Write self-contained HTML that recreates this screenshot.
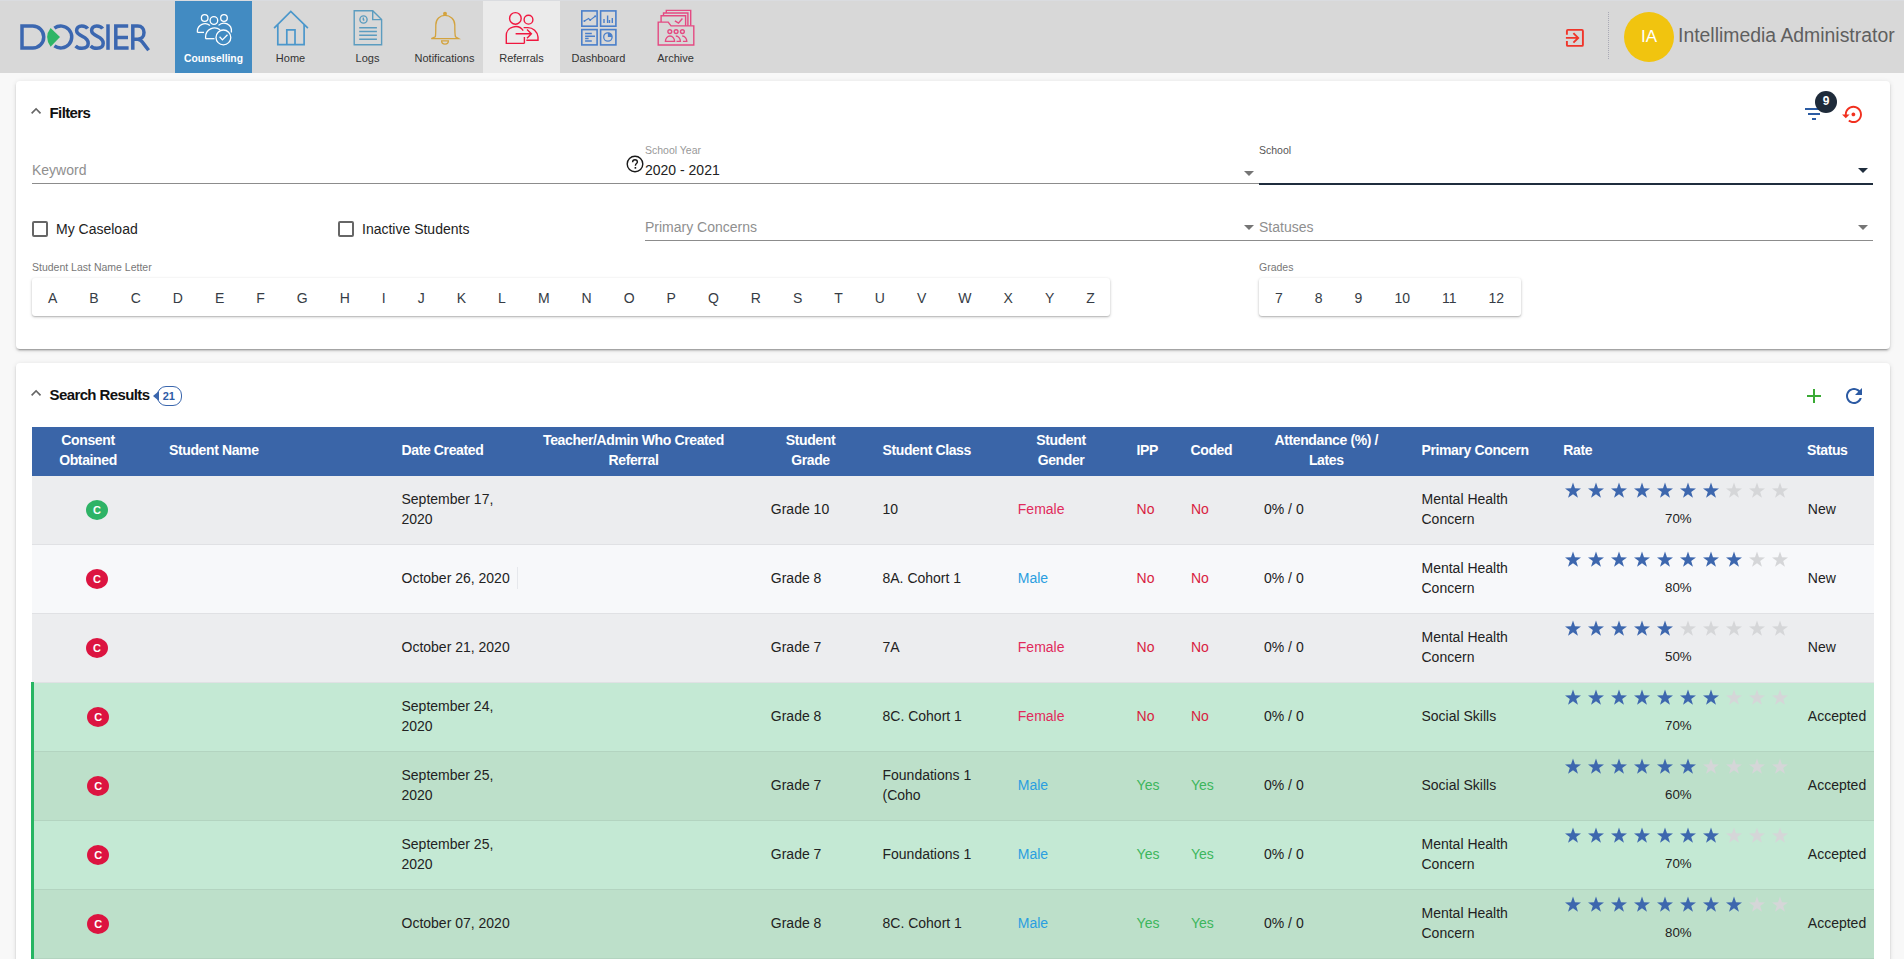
<!DOCTYPE html>
<html><head><meta charset="utf-8"><title>Dossier</title>
<style>
*{box-sizing:border-box;margin:0;padding:0}
html,body{width:1904px;height:959px;overflow:hidden}
body{background:#f8f8f8;font-family:"Liberation Sans",sans-serif;color:#222;position:relative}
.abs{position:absolute}
#hdr{position:absolute;left:0;top:0;width:1904px;height:73px;background:#d8d8d8;border-top:1px solid #dadce0}
.tab{position:absolute;top:0px;width:77px;height:72px;text-align:center}
.tab .lbl{position:absolute;left:0;right:0;top:51px;font-size:11px;color:#333;line-height:13px}
.tab svg{position:absolute;left:0;top:0}
.card{position:absolute;background:#fff;border-radius:4px;box-shadow:0 3px 1px -2px rgba(0,0,0,.2),0 2px 2px 0 rgba(0,0,0,.14),0 1px 5px 0 rgba(0,0,0,.12)}
.ttl{position:absolute;font-size:15px;font-weight:700;color:#111;letter-spacing:-0.6px;line-height:17px}
.small{position:absolute;font-size:10.5px;color:#8a8a8a;line-height:12px;white-space:nowrap}
.inp{position:absolute;font-size:14px;line-height:16px;white-space:nowrap}
.uline{position:absolute;height:1px;background:#8c8c8c}
.arrow{position:absolute;width:0;height:0;border-left:5px solid transparent;border-right:5px solid transparent;border-top:5px solid #555}
.cb{position:absolute;width:16px;height:16px;border:2px solid #666;border-radius:2px}
.btnbox{position:absolute;background:#fff;border-radius:3px;box-shadow:0 1px 3px rgba(0,0,0,.25),0 1px 1px rgba(0,0,0,.1);display:flex;height:38px}
.btnbox span{display:block;padding:0 16px;font-size:14px;line-height:40px;height:38px;color:#363c45}
#tbl{position:absolute;left:32px;top:427px;width:1842px}
.th{position:absolute;top:0;height:49px;background:#3a65a8;width:1842px}
.th div{position:absolute;color:#fff;font-weight:700;font-size:14px;line-height:20px;letter-spacing:-0.38px;white-space:nowrap}
.row{position:absolute;left:0;width:1842px;height:69px;border-bottom:1px solid #dcdde0}
.row div{position:absolute;font-size:14px;line-height:20px;color:#222;white-space:nowrap}
.row div.badge{width:22px;height:20px;border-radius:50%;color:#fff;font-weight:700;font-size:11px;line-height:20px;text-align:center}
.stars{font-size:0}
.stars svg{position:absolute;top:0}
</style></head>
<body>
<div id="hdr"><svg class="abs" style="left:0px;top:-1px;" width="160" height="73" viewBox="0 0 160 73">
<g fill="none" stroke="#3b67b0" stroke-width="3.5">
<path d="M22,26.1 H32.8 A10.95,10.95 0 0 1 32.8,48 H22 Z"/>
<path d="M54.4,28.1 A10.95,10.95 0 1 1 54.4,45.9"/>
<path d="M87.6,28.6 C86.4,26.7 84.2,25.9 81.8,25.9 C78.4,25.9 76.6,28.0 76.6,30.6 C76.6,33.6 79.4,35.0 82.4,36.3 C85.6,37.7 88.2,39.4 88.2,43.3 C88.2,46.6 85.6,48.3 82.0,48.3 C79.4,48.3 77.2,47.5 75.6,45.9"/>
<path d="M102.6,28.6 C101.4,26.7 99.2,25.9 96.8,25.9 C93.4,25.9 91.6,28.0 91.6,30.6 C91.6,33.6 94.4,35.0 97.4,36.3 C100.6,37.7 103.2,39.4 103.2,43.3 C103.2,46.6 100.6,48.3 97.0,48.3 C94.4,48.3 92.2,47.5 90.6,45.9"/>
<path d="M108,24.3 V49.8"/>
<path d="M128.2,26.1 H115.8 V48 H128.6 M115.8,37.4 H128"/>
<path d="M132.8,49.8 V26.1 H137.8 C141.8,26.1 144,28.8 144,32.6 C144,36.4 141.5,39.2 137.8,39.2 H132.8 M137.8,39.2 C140,39.4 141.4,40.6 142.8,42.6 L148.6,50.2"/>
</g>
<path fill="#2eb566" d="M50.6,28 L60,37 L50.6,46.8 Q43.6,37 50.6,28 Z"/>
</svg><div class="tab" style="left:175px;background:#428bc2;"><svg class="abs" style="left:0px;top:-1px;" width="77" height="72" viewBox="0 0 77 72">
<g fill="none" stroke="#fff" stroke-width="1.3">
<circle cx="29.7" cy="18" r="3.3"/>
<circle cx="38.9" cy="20.5" r="3.8"/>
<circle cx="49" cy="18" r="3.3"/>
<path d="M22.4,32.4 V31 A7.6,7.6 0 0 1 35,25.6"/>
<path d="M43.5,25.4 A7.6,7.6 0 0 1 56.4,31.6 V32.4"/>
<path d="M30.6,38.7 V37 A9,9 0 0 1 45,29.8"/>
<path d="M30.6,38.7 H39.5"/>
<path d="M22.4,32.4 H29"/>
<circle cx="48.4" cy="37.4" r="7.4"/>
<path d="M44.6,36.8 L47.4,39.9 L52.5,34.8"/>
</g></svg><div class="lbl" style="color:#fff;font-weight:700;font-size:10.3px">Counselling</div></div><div class="tab" style="left:252px;"><svg class="abs" style="left:0px;top:-1px;" width="77" height="72" viewBox="0 0 77 72">
<g fill="none" stroke="#4b97cb" stroke-width="1.7">
<path d="M22.1,28.1 L38.8,11.4 L55.9,28.1"/>
<path d="M25.8,24.8 V44.6 H52.1 V24.8"/>
<path d="M34.8,44.6 V29.8 H43 V44.6"/>
</g></svg><div class="lbl" style="color:#333;font-weight:400;font-size:11px">Home</div></div><div class="tab" style="left:329px;"><svg class="abs" style="left:0px;top:-1px;" width="77" height="72" viewBox="0 0 77 72">
<g fill="none" stroke="#5b9cbf" stroke-width="1.4">
<path d="M25.2,10.8 H43.7 L52.6,19.6 V44.8 H25.2 Z"/>
<path d="M43.7,10.8 V19.6 H52.6"/>
<circle cx="34.5" cy="19.5" r="3.6"/>
<path d="M34.3,17.6 V19.6 L35.3,20.6"/>
<path d="M30.2,27.7 H47.9 M30.2,31.5 H47.9 M30.2,35.3 H47.9 M30.2,39.3 H47.9"/>
</g></svg><div class="lbl" style="color:#333;font-weight:400;font-size:11px">Logs</div></div><div class="tab" style="left:406px;"><svg class="abs" style="left:0px;top:-1px;" width="77" height="72" viewBox="0 0 77 72">
<g fill="none" stroke="#d3a33e" stroke-width="1.3">
<path d="M29.3,36.8 C29.8,35 29.8,32 29.8,25 C29.8,19 34,15.4 39,15.4 C44,15.4 48.8,19 48.8,25 C48.8,32 48.8,35 49.5,36.8 L52.6,38.6 H25.3 Z"/>
<path d="M35.6,40.8 A3.4,3.4 0 0 0 42.4,40.8 Z"/>
</g>
<circle cx="39" cy="13.8" r="2" fill="#d3a33e"/></svg><div class="lbl" style="color:#333;font-weight:400;font-size:11px">Notifications</div></div><div class="tab" style="left:483px;background:#ebebeb;"><svg class="abs" style="left:0px;top:-1px;" width="77" height="72" viewBox="0 0 77 72">
<g fill="none" stroke="#f0173f" stroke-width="1.4">
<circle cx="32.4" cy="18.4" r="5.8"/>
<circle cx="45.5" cy="19.7" r="4.4"/>
<path d="M41.4,43.4 H23.3 V35.6 A9.2,8.6 0 0 1 40.2,30.6"/>
<path d="M41.4,37 V43.4"/>
<path d="M40.6,27.6 H44.4 A10.2,10.2 0 0 1 55,37 V40.2 H43.3"/>
<path d="M32.6,33.8 H48.4 M44,29.4 L48.4,33.8 L44,38.2"/>
</g></svg><div class="lbl" style="color:#333;font-weight:400;font-size:11px">Referrals</div></div><div class="tab" style="left:560px;"><svg class="abs" style="left:0px;top:-1px;" width="77" height="72" viewBox="0 0 77 72">
<g fill="none" stroke="#4a7fca" stroke-width="1.6">
<rect x="21.8" y="10.9" width="15.3" height="15.3"/>
<rect x="40.6" y="10.9" width="15.3" height="15.3"/>
<rect x="21.8" y="29.6" width="15.3" height="15.3"/>
<rect x="40.6" y="29.6" width="15.3" height="15.3"/>
<path d="M24.4,20.9 L28.6,18.5 L30.2,20.1 L35.2,16.3" stroke-width="1.1"/>
<path d="M44,23 V18.9 M47.6,23 V15.4 M49.5,23 V20.1 M52.3,23 V18.1" stroke-width="1.4"/>
<path d="M25.1,33.5 H31.8 M25.1,36.2 H35 M25.1,38.6 H28.6 M25.1,41 H31.8" stroke-width="1.5"/>
<circle cx="47.9" cy="37" r="4.2" stroke-width="1.3"/>
</g>
<g fill="#4a7fca"><circle cx="24.4" cy="20.9" r="1"/><circle cx="30.2" cy="20.1" r="1"/><circle cx="35.2" cy="16.3" r="1"/>
<path d="M47.9,32.8 A4.2,4.2 0 0 1 52.1,37 H47.9 Z"/></g></svg><div class="lbl" style="color:#333;font-weight:400;font-size:11px">Dashboard</div></div><div class="tab" style="left:637px;"><svg class="abs" style="left:0px;top:-1px;" width="77" height="72" viewBox="0 0 77 72">
<g fill="none" stroke="#e44a82" stroke-width="1.4">
<path d="M21.2,45 V22.1 H31.2 L34,25.9 H56.8 V45 Z"/>
<path d="M24.1,22 V15.8 H48.6 V25.8"/>
<path d="M26.5,15.7 V13 H50.9 V25.8"/>
<path d="M29.3,12.9 V10.4 H53.7 V25.8"/>
<path d="M37.9,20.9 L41.5,23.2 L45.4,18.5"/>
<circle cx="32.8" cy="31.6" r="1.9"/><circle cx="39.1" cy="31.6" r="1.9"/><circle cx="45.4" cy="31.6" r="1.9"/>
<path d="M28.4,41.4 A4.6,5.4 0 0 1 37.6,41.4 Z"/>
<path d="M38.8,36 A4.6,5.4 0 0 1 43.4,41.4 H39.5"/>
<path d="M45.2,36 A4.6,5.4 0 0 1 49.8,41.4 H45.9"/>
</g></svg><div class="lbl" style="color:#333;font-weight:400;font-size:11px">Archive</div></div><svg class="abs" style="left:1564px;top:25px;" width="24" height="24" viewBox="0 0 24 24"><g fill="none" stroke="#f0352a" stroke-width="1.9"><path d="M2.9,8.8 V4.9 Q2.9,3.9 3.9,3.9 H17.9 Q18.9,3.9 18.9,4.9 V18.9 Q18.9,19.9 17.9,19.9 H3.9 Q2.9,19.9 2.9,18.9 V14.9"/><path d="M1.9,11.9 H14.6 M9.4,7.1 L14.2,11.9 L9.4,16.6"/></g></svg><div class="abs" style="left:1608px;top:11px;width:1px;height:47px;border-left:1px dotted #a9a9b5"></div><div class="abs" style="left:1624px;top:11px;width:50px;height:50px;border-radius:25px;background:#f1c40f;color:#fff;font-size:17px;line-height:50px;text-align:center">IA</div><div class="abs" style="left:1678px;top:23px;font-size:19.4px;line-height:22px;color:#5f5f5f;white-space:nowrap">Intellimedia Administrator</div></div><div class="card" style="left:16px;top:81px;width:1874px;height:268px"></div><svg class="abs" style="left:26px;top:101px;transform-origin:0 0;transform:scale(0.84)" width="24" height="24" viewBox="0 0 24 24"><path fill="#666" d="M12 8l-6 6 1.41 1.41L12 10.83l4.59 4.58L18 14z"/></svg><div class="ttl" style="left:49.5px;top:104px">Filters</div><div class="abs" style="left:1804.7px;top:108.2px;width:18px;height:1.6px;background:#2b5ba3"></div><div class="abs" style="left:1807.7px;top:113.1px;width:12.1px;height:1.7px;background:#2b5ba3"></div><div class="abs" style="left:1811.5px;top:118.1px;width:4.3px;height:1.6px;background:#2b5ba3"></div><div class="abs" style="left:1815px;top:91px;width:22px;height:22px;border-radius:11px;background:#1f2b3a;color:#fff;font-weight:700;font-size:12px;line-height:21px;text-align:center">9</div><svg class="abs" style="left:1841.7px;top:102.7px;transform-origin:0 0;transform:scale(0.95)" width="24" height="24" viewBox="0 0 24 24"><path fill="#f1301f" d="M14 12c0-1.1-.9-2-2-2s-2 .9-2 2 .9 2 2 2 2-.9 2-2zm-2-9c-4.97 0-9 4.030-9 9H0l4 4 4-4H5c0-3.87 3.13-7 7-7s7 3.13 7 7-3.13 7-7 7c-1.51 0-2.910-.49-4.06-1.3l-1.42 1.44C8.04 20.3 9.94 21 12 21c4.97 0 9-4.03 9-9s-4.03-9-9-9z"/></svg><div class="inp" style="left:32px;top:162px;color:#8f8f8f">Keyword</div><div class="uline" style="left:32px;top:183px;width:613px"></div><svg class="abs" style="left:626px;top:155px;" width="20" height="20" viewBox="0 0 20 20"><circle cx="9" cy="9" r="7.8" fill="none" stroke="#1a1a1a" stroke-width="1.4"/><path d="M6.6,7.2 C6.6,5.6 7.7,4.7 9,4.7 C10.4,4.7 11.4,5.6 11.4,6.9 C11.4,8.5 9.4,8.7 9.4,10.7" fill="none" stroke="#1a1a1a" stroke-width="1.4"/><rect x="8.6" y="12" width="1.6" height="1.7" fill="#1a1a1a"/></svg><div class="small" style="left:645px;top:143.8px;color:#999">School Year</div><div class="inp" style="left:645px;top:162px;color:#222">2020 - 2021</div><div class="uline" style="left:645px;top:183px;width:614px"></div><div class="arrow" style="left:1244px;top:171px;border-top-color:#757575"></div><div class="small" style="left:1259px;top:143.5px;color:#555">School</div><div class="abs" style="left:1259px;top:183px;width:614px;height:2px;background:#1f2d3d"></div><div class="arrow" style="left:1858px;top:168px;border-top-color:#1f2d3d"></div><div class="cb" style="left:32px;top:221px"></div><div class="inp" style="left:56px;top:221px">My Caseload</div><div class="cb" style="left:338px;top:221px"></div><div class="inp" style="left:362px;top:221px">Inactive Students</div><div class="inp" style="left:645px;top:219px;color:#8f8f8f">Primary Concerns</div><div class="uline" style="left:645px;top:240px;width:614px"></div><div class="arrow" style="left:1244px;top:225px;border-top-color:#757575"></div><div class="inp" style="left:1259px;top:219px;color:#8f8f8f">Statuses</div><div class="uline" style="left:1259px;top:240px;width:614px"></div><div class="arrow" style="left:1858px;top:225px;border-top-color:#757575"></div><div class="small" style="left:32px;top:261px;color:#777">Student Last Name Letter</div><div class="btnbox" style="left:32px;top:278px;width:1078px"><span>A</span><span>B</span><span>C</span><span>D</span><span>E</span><span>F</span><span>G</span><span>H</span><span>I</span><span>J</span><span>K</span><span>L</span><span>M</span><span>N</span><span>O</span><span>P</span><span>Q</span><span>R</span><span>S</span><span>T</span><span>U</span><span>V</span><span>W</span><span>X</span><span>Y</span><span>Z</span></div><div class="small" style="left:1259px;top:261px;color:#777">Grades</div><div class="btnbox" style="left:1259px;top:278px;width:262px"><span>7</span><span>8</span><span>9</span><span>10</span><span>11</span><span>12</span></div><div class="card" style="left:16px;top:363px;width:1874px;height:620px"></div><svg class="abs" style="left:26px;top:383px;transform-origin:0 0;transform:scale(0.84)" width="24" height="24" viewBox="0 0 24 24"><path fill="#666" d="M12 8l-6 6 1.41 1.41L12 10.83l4.59 4.58L18 14z"/></svg><div class="ttl" style="left:49.5px;top:386px">Search Results</div><div class="abs" style="left:157.3px;top:386px;width:24.6px;height:20px;border:1.6px solid #3a66ad;border-radius:9px;color:#2f5ca6;font-size:11px;font-weight:700;line-height:19px;text-align:center;padding-right:1.5px;background:#fff">21</div><div class="abs" style="left:153px;top:390.6px;width:0;height:0;border-top:5px solid transparent;border-bottom:5px solid transparent;border-right:6px solid #3a66ad"></div><svg class="abs" style="left:1801.5px;top:384px;" width="24" height="24" viewBox="0 0 24 24"><path fill="#3aaa35" d="M19 13h-6v6h-2v-6H5v-2h6V5h2v6h6v2z"/></svg><svg class="abs" style="left:1841.8px;top:384px;" width="24" height="24" viewBox="0 0 24 24"><path fill="#2c5aa3" d="M17.65 6.35C16.2 4.9 14.21 4 12 4c-4.42 0-7.990 3.58-7.99 8s3.57 8 7.99 8c3.73 0 6.84-2.55 7.73-6h-2.08c-.82 2.33-3.04 4-5.65 4-3.31 0-6-2.69-6-6s2.69-6 6-6c1.66 0 3.140.69 4.22 1.78L13 11h7V4l-2.35 2.35z"/></svg><div id="tbl"><div class="th"><div style="left:-4.0px;width:120px;text-align:center;top:3.4px">Consent<br>Obtained</div><div style="left:137px;top:13.4px">Student Name</div><div style="left:369.5px;top:13.4px">Date Created</div><div style="left:491.5px;width:220px;text-align:center;top:3.4px">Teacher/Admin Who Created<br>Referral</div><div style="left:738.5px;width:80px;text-align:center;top:3.4px">Student<br>Grade</div><div style="left:850.5px;top:13.4px">Student Class</div><div style="left:989.0px;width:80px;text-align:center;top:3.4px">Student<br>Gender</div><div style="left:1104.5px;top:13.4px">IPP</div><div style="left:1158.5px;top:13.4px">Coded</div><div style="left:1224.3px;width:140px;text-align:center;top:3.4px">Attendance (%) /<br>Lates</div><div style="left:1389.5px;top:13.4px">Primary Concern</div><div style="left:1531.3px;top:13.4px">Rate</div><div style="left:1775px;top:13.4px">Status</div></div><div class="row" style="top:49px;background:#ecedef;border-bottom-color:#e0e1e4"><div class="badge" style="left:54px;top:24px;background:#2eb366">C</div><div style="left:369.5px;top:13px;">September 17,<br>2020</div><div style="left:738.8px;top:23px;">Grade 10</div><div style="left:850.5px;top:23px;">10</div><div style="left:985.8px;top:23px;color:#e12a5c">Female</div><div style="left:1104.6px;top:23px;color:#d81d41">No</div><div style="left:1159px;top:23px;color:#d81d41">No</div><div style="left:1232px;top:23px;">0% / 0</div><div style="left:1389.5px;top:13px;">Mental Health<br>Concern</div><div style="left:1532.3px;top:5.8px;width:235px;height:18px"><svg style="position:absolute;left:0px;top:0" width="18" height="18" viewBox="0 0 18 18"><path fill="#3d67ae" d="M9.00 0.60 L10.97 6.28 L16.99 6.40 L12.20 10.04 L13.94 15.80 L9.00 12.36 L4.06 15.80 L5.80 10.04 L1.01 6.40 L7.03 6.28 Z"/></svg><svg style="position:absolute;left:23px;top:0" width="18" height="18" viewBox="0 0 18 18"><path fill="#3d67ae" d="M9.00 0.60 L10.97 6.28 L16.99 6.40 L12.20 10.04 L13.94 15.80 L9.00 12.36 L4.06 15.80 L5.80 10.04 L1.01 6.40 L7.03 6.28 Z"/></svg><svg style="position:absolute;left:46px;top:0" width="18" height="18" viewBox="0 0 18 18"><path fill="#3d67ae" d="M9.00 0.60 L10.97 6.28 L16.99 6.40 L12.20 10.04 L13.94 15.80 L9.00 12.36 L4.06 15.80 L5.80 10.04 L1.01 6.40 L7.03 6.28 Z"/></svg><svg style="position:absolute;left:69px;top:0" width="18" height="18" viewBox="0 0 18 18"><path fill="#3d67ae" d="M9.00 0.60 L10.97 6.28 L16.99 6.40 L12.20 10.04 L13.94 15.80 L9.00 12.36 L4.06 15.80 L5.80 10.04 L1.01 6.40 L7.03 6.28 Z"/></svg><svg style="position:absolute;left:92px;top:0" width="18" height="18" viewBox="0 0 18 18"><path fill="#3d67ae" d="M9.00 0.60 L10.97 6.28 L16.99 6.40 L12.20 10.04 L13.94 15.80 L9.00 12.36 L4.06 15.80 L5.80 10.04 L1.01 6.40 L7.03 6.28 Z"/></svg><svg style="position:absolute;left:115px;top:0" width="18" height="18" viewBox="0 0 18 18"><path fill="#3d67ae" d="M9.00 0.60 L10.97 6.28 L16.99 6.40 L12.20 10.04 L13.94 15.80 L9.00 12.36 L4.06 15.80 L5.80 10.04 L1.01 6.40 L7.03 6.28 Z"/></svg><svg style="position:absolute;left:138px;top:0" width="18" height="18" viewBox="0 0 18 18"><path fill="#3d67ae" d="M9.00 0.60 L10.97 6.28 L16.99 6.40 L12.20 10.04 L13.94 15.80 L9.00 12.36 L4.06 15.80 L5.80 10.04 L1.01 6.40 L7.03 6.28 Z"/></svg><svg style="position:absolute;left:161px;top:0" width="18" height="18" viewBox="0 0 18 18"><path fill="#d5d6d8" d="M9.00 0.60 L10.97 6.28 L16.99 6.40 L12.20 10.04 L13.94 15.80 L9.00 12.36 L4.06 15.80 L5.80 10.04 L1.01 6.40 L7.03 6.28 Z"/></svg><svg style="position:absolute;left:184px;top:0" width="18" height="18" viewBox="0 0 18 18"><path fill="#d5d6d8" d="M9.00 0.60 L10.97 6.28 L16.99 6.40 L12.20 10.04 L13.94 15.80 L9.00 12.36 L4.06 15.80 L5.80 10.04 L1.01 6.40 L7.03 6.28 Z"/></svg><svg style="position:absolute;left:207px;top:0" width="18" height="18" viewBox="0 0 18 18"><path fill="#d5d6d8" d="M9.00 0.60 L10.97 6.28 L16.99 6.40 L12.20 10.04 L13.94 15.80 L9.00 12.36 L4.06 15.80 L5.80 10.04 L1.01 6.40 L7.03 6.28 Z"/></svg></div><div style="left:1616.4px;top:32.5px;width:60px;text-align:center;font-size:13.3px">70%</div><div style="left:1775.8px;top:23px;">New</div></div><div class="row" style="top:118px;background:#f7f8fa;border-bottom-color:#e0e1e4"><div class="badge" style="left:54px;top:24px;background:#dc1440">C</div><div style="left:369.5px;top:23px;">October 26, 2020</div><div style="left:485px;top:22px;width:1px;height:22px;background:#e6e8ec"></div><div style="left:738.8px;top:23px;">Grade 8</div><div style="left:850.5px;top:23px;">8A. Cohort 1</div><div style="left:985.8px;top:23px;color:#2a9ee0">Male</div><div style="left:1104.6px;top:23px;color:#d81d41">No</div><div style="left:1159px;top:23px;color:#d81d41">No</div><div style="left:1232px;top:23px;">0% / 0</div><div style="left:1389.5px;top:13px;">Mental Health<br>Concern</div><div style="left:1532.3px;top:5.8px;width:235px;height:18px"><svg style="position:absolute;left:0px;top:0" width="18" height="18" viewBox="0 0 18 18"><path fill="#3d67ae" d="M9.00 0.60 L10.97 6.28 L16.99 6.40 L12.20 10.04 L13.94 15.80 L9.00 12.36 L4.06 15.80 L5.80 10.04 L1.01 6.40 L7.03 6.28 Z"/></svg><svg style="position:absolute;left:23px;top:0" width="18" height="18" viewBox="0 0 18 18"><path fill="#3d67ae" d="M9.00 0.60 L10.97 6.28 L16.99 6.40 L12.20 10.04 L13.94 15.80 L9.00 12.36 L4.06 15.80 L5.80 10.04 L1.01 6.40 L7.03 6.28 Z"/></svg><svg style="position:absolute;left:46px;top:0" width="18" height="18" viewBox="0 0 18 18"><path fill="#3d67ae" d="M9.00 0.60 L10.97 6.28 L16.99 6.40 L12.20 10.04 L13.94 15.80 L9.00 12.36 L4.06 15.80 L5.80 10.04 L1.01 6.40 L7.03 6.28 Z"/></svg><svg style="position:absolute;left:69px;top:0" width="18" height="18" viewBox="0 0 18 18"><path fill="#3d67ae" d="M9.00 0.60 L10.97 6.28 L16.99 6.40 L12.20 10.04 L13.94 15.80 L9.00 12.36 L4.06 15.80 L5.80 10.04 L1.01 6.40 L7.03 6.28 Z"/></svg><svg style="position:absolute;left:92px;top:0" width="18" height="18" viewBox="0 0 18 18"><path fill="#3d67ae" d="M9.00 0.60 L10.97 6.28 L16.99 6.40 L12.20 10.04 L13.94 15.80 L9.00 12.36 L4.06 15.80 L5.80 10.04 L1.01 6.40 L7.03 6.28 Z"/></svg><svg style="position:absolute;left:115px;top:0" width="18" height="18" viewBox="0 0 18 18"><path fill="#3d67ae" d="M9.00 0.60 L10.97 6.28 L16.99 6.40 L12.20 10.04 L13.94 15.80 L9.00 12.36 L4.06 15.80 L5.80 10.04 L1.01 6.40 L7.03 6.28 Z"/></svg><svg style="position:absolute;left:138px;top:0" width="18" height="18" viewBox="0 0 18 18"><path fill="#3d67ae" d="M9.00 0.60 L10.97 6.28 L16.99 6.40 L12.20 10.04 L13.94 15.80 L9.00 12.36 L4.06 15.80 L5.80 10.04 L1.01 6.40 L7.03 6.28 Z"/></svg><svg style="position:absolute;left:161px;top:0" width="18" height="18" viewBox="0 0 18 18"><path fill="#3d67ae" d="M9.00 0.60 L10.97 6.28 L16.99 6.40 L12.20 10.04 L13.94 15.80 L9.00 12.36 L4.06 15.80 L5.80 10.04 L1.01 6.40 L7.03 6.28 Z"/></svg><svg style="position:absolute;left:184px;top:0" width="18" height="18" viewBox="0 0 18 18"><path fill="#d5d6d8" d="M9.00 0.60 L10.97 6.28 L16.99 6.40 L12.20 10.04 L13.94 15.80 L9.00 12.36 L4.06 15.80 L5.80 10.04 L1.01 6.40 L7.03 6.28 Z"/></svg><svg style="position:absolute;left:207px;top:0" width="18" height="18" viewBox="0 0 18 18"><path fill="#d5d6d8" d="M9.00 0.60 L10.97 6.28 L16.99 6.40 L12.20 10.04 L13.94 15.80 L9.00 12.36 L4.06 15.80 L5.80 10.04 L1.01 6.40 L7.03 6.28 Z"/></svg></div><div style="left:1616.4px;top:32.5px;width:60px;text-align:center;font-size:13.3px">80%</div><div style="left:1775.8px;top:23px;">New</div></div><div class="row" style="top:187px;background:#ecedef;border-bottom-color:#e0e1e4"><div class="badge" style="left:54px;top:24px;background:#dc1440">C</div><div style="left:369.5px;top:23px;">October 21, 2020</div><div style="left:738.8px;top:23px;">Grade 7</div><div style="left:850.5px;top:23px;">7A</div><div style="left:985.8px;top:23px;color:#e12a5c">Female</div><div style="left:1104.6px;top:23px;color:#d81d41">No</div><div style="left:1159px;top:23px;color:#d81d41">No</div><div style="left:1232px;top:23px;">0% / 0</div><div style="left:1389.5px;top:13px;">Mental Health<br>Concern</div><div style="left:1532.3px;top:5.8px;width:235px;height:18px"><svg style="position:absolute;left:0px;top:0" width="18" height="18" viewBox="0 0 18 18"><path fill="#3d67ae" d="M9.00 0.60 L10.97 6.28 L16.99 6.40 L12.20 10.04 L13.94 15.80 L9.00 12.36 L4.06 15.80 L5.80 10.04 L1.01 6.40 L7.03 6.28 Z"/></svg><svg style="position:absolute;left:23px;top:0" width="18" height="18" viewBox="0 0 18 18"><path fill="#3d67ae" d="M9.00 0.60 L10.97 6.28 L16.99 6.40 L12.20 10.04 L13.94 15.80 L9.00 12.36 L4.06 15.80 L5.80 10.04 L1.01 6.40 L7.03 6.28 Z"/></svg><svg style="position:absolute;left:46px;top:0" width="18" height="18" viewBox="0 0 18 18"><path fill="#3d67ae" d="M9.00 0.60 L10.97 6.28 L16.99 6.40 L12.20 10.04 L13.94 15.80 L9.00 12.36 L4.06 15.80 L5.80 10.04 L1.01 6.40 L7.03 6.28 Z"/></svg><svg style="position:absolute;left:69px;top:0" width="18" height="18" viewBox="0 0 18 18"><path fill="#3d67ae" d="M9.00 0.60 L10.97 6.28 L16.99 6.40 L12.20 10.04 L13.94 15.80 L9.00 12.36 L4.06 15.80 L5.80 10.04 L1.01 6.40 L7.03 6.28 Z"/></svg><svg style="position:absolute;left:92px;top:0" width="18" height="18" viewBox="0 0 18 18"><path fill="#3d67ae" d="M9.00 0.60 L10.97 6.28 L16.99 6.40 L12.20 10.04 L13.94 15.80 L9.00 12.36 L4.06 15.80 L5.80 10.04 L1.01 6.40 L7.03 6.28 Z"/></svg><svg style="position:absolute;left:115px;top:0" width="18" height="18" viewBox="0 0 18 18"><path fill="#d5d6d8" d="M9.00 0.60 L10.97 6.28 L16.99 6.40 L12.20 10.04 L13.94 15.80 L9.00 12.36 L4.06 15.80 L5.80 10.04 L1.01 6.40 L7.03 6.28 Z"/></svg><svg style="position:absolute;left:138px;top:0" width="18" height="18" viewBox="0 0 18 18"><path fill="#d5d6d8" d="M9.00 0.60 L10.97 6.28 L16.99 6.40 L12.20 10.04 L13.94 15.80 L9.00 12.36 L4.06 15.80 L5.80 10.04 L1.01 6.40 L7.03 6.28 Z"/></svg><svg style="position:absolute;left:161px;top:0" width="18" height="18" viewBox="0 0 18 18"><path fill="#d5d6d8" d="M9.00 0.60 L10.97 6.28 L16.99 6.40 L12.20 10.04 L13.94 15.80 L9.00 12.36 L4.06 15.80 L5.80 10.04 L1.01 6.40 L7.03 6.28 Z"/></svg><svg style="position:absolute;left:184px;top:0" width="18" height="18" viewBox="0 0 18 18"><path fill="#d5d6d8" d="M9.00 0.60 L10.97 6.28 L16.99 6.40 L12.20 10.04 L13.94 15.80 L9.00 12.36 L4.06 15.80 L5.80 10.04 L1.01 6.40 L7.03 6.28 Z"/></svg><svg style="position:absolute;left:207px;top:0" width="18" height="18" viewBox="0 0 18 18"><path fill="#d5d6d8" d="M9.00 0.60 L10.97 6.28 L16.99 6.40 L12.20 10.04 L13.94 15.80 L9.00 12.36 L4.06 15.80 L5.80 10.04 L1.01 6.40 L7.03 6.28 Z"/></svg></div><div style="left:1616.4px;top:32.5px;width:60px;text-align:center;font-size:13.3px">50%</div><div style="left:1775.8px;top:23px;">New</div></div><div class="row" style="top:256px;background:#c4e9d4;border-bottom-color:#b3d4c0"><div style="left:-1px;top:-1px;width:3px;height:70px;background:#26b562"></div><div class="badge" style="left:55.2px;top:24px;background:#dc1440">C</div><div style="left:369.5px;top:13px;">September 24,<br>2020</div><div style="left:738.8px;top:23px;">Grade 8</div><div style="left:850.5px;top:23px;">8C. Cohort 1</div><div style="left:985.8px;top:23px;color:#e12a5c">Female</div><div style="left:1104.6px;top:23px;color:#d81d41">No</div><div style="left:1159px;top:23px;color:#d81d41">No</div><div style="left:1232px;top:23px;">0% / 0</div><div style="left:1389.5px;top:23px;">Social Skills</div><div style="left:1532.3px;top:5.8px;width:235px;height:18px"><svg style="position:absolute;left:0px;top:0" width="18" height="18" viewBox="0 0 18 18"><path fill="#3d67ae" d="M9.00 0.60 L10.97 6.28 L16.99 6.40 L12.20 10.04 L13.94 15.80 L9.00 12.36 L4.06 15.80 L5.80 10.04 L1.01 6.40 L7.03 6.28 Z"/></svg><svg style="position:absolute;left:23px;top:0" width="18" height="18" viewBox="0 0 18 18"><path fill="#3d67ae" d="M9.00 0.60 L10.97 6.28 L16.99 6.40 L12.20 10.04 L13.94 15.80 L9.00 12.36 L4.06 15.80 L5.80 10.04 L1.01 6.40 L7.03 6.28 Z"/></svg><svg style="position:absolute;left:46px;top:0" width="18" height="18" viewBox="0 0 18 18"><path fill="#3d67ae" d="M9.00 0.60 L10.97 6.28 L16.99 6.40 L12.20 10.04 L13.94 15.80 L9.00 12.36 L4.06 15.80 L5.80 10.04 L1.01 6.40 L7.03 6.28 Z"/></svg><svg style="position:absolute;left:69px;top:0" width="18" height="18" viewBox="0 0 18 18"><path fill="#3d67ae" d="M9.00 0.60 L10.97 6.28 L16.99 6.40 L12.20 10.04 L13.94 15.80 L9.00 12.36 L4.06 15.80 L5.80 10.04 L1.01 6.40 L7.03 6.28 Z"/></svg><svg style="position:absolute;left:92px;top:0" width="18" height="18" viewBox="0 0 18 18"><path fill="#3d67ae" d="M9.00 0.60 L10.97 6.28 L16.99 6.40 L12.20 10.04 L13.94 15.80 L9.00 12.36 L4.06 15.80 L5.80 10.04 L1.01 6.40 L7.03 6.28 Z"/></svg><svg style="position:absolute;left:115px;top:0" width="18" height="18" viewBox="0 0 18 18"><path fill="#3d67ae" d="M9.00 0.60 L10.97 6.28 L16.99 6.40 L12.20 10.04 L13.94 15.80 L9.00 12.36 L4.06 15.80 L5.80 10.04 L1.01 6.40 L7.03 6.28 Z"/></svg><svg style="position:absolute;left:138px;top:0" width="18" height="18" viewBox="0 0 18 18"><path fill="#3d67ae" d="M9.00 0.60 L10.97 6.28 L16.99 6.40 L12.20 10.04 L13.94 15.80 L9.00 12.36 L4.06 15.80 L5.80 10.04 L1.01 6.40 L7.03 6.28 Z"/></svg><svg style="position:absolute;left:161px;top:0" width="18" height="18" viewBox="0 0 18 18"><path fill="#d5d6d8" d="M9.00 0.60 L10.97 6.28 L16.99 6.40 L12.20 10.04 L13.94 15.80 L9.00 12.36 L4.06 15.80 L5.80 10.04 L1.01 6.40 L7.03 6.28 Z"/></svg><svg style="position:absolute;left:184px;top:0" width="18" height="18" viewBox="0 0 18 18"><path fill="#d5d6d8" d="M9.00 0.60 L10.97 6.28 L16.99 6.40 L12.20 10.04 L13.94 15.80 L9.00 12.36 L4.06 15.80 L5.80 10.04 L1.01 6.40 L7.03 6.28 Z"/></svg><svg style="position:absolute;left:207px;top:0" width="18" height="18" viewBox="0 0 18 18"><path fill="#d5d6d8" d="M9.00 0.60 L10.97 6.28 L16.99 6.40 L12.20 10.04 L13.94 15.80 L9.00 12.36 L4.06 15.80 L5.80 10.04 L1.01 6.40 L7.03 6.28 Z"/></svg></div><div style="left:1616.4px;top:32.5px;width:60px;text-align:center;font-size:13.3px">70%</div><div style="left:1775.8px;top:23px;">Accepted</div></div><div class="row" style="top:325px;background:#bde0ca;border-bottom-color:#b3d4c0"><div style="left:-1px;top:-1px;width:3px;height:70px;background:#26b562"></div><div class="badge" style="left:55.2px;top:24px;background:#dc1440">C</div><div style="left:369.5px;top:13px;">September 25,<br>2020</div><div style="left:738.8px;top:23px;">Grade 7</div><div style="left:850.5px;top:13px;">Foundations 1<br>(Coho</div><div style="left:985.8px;top:23px;color:#2a9ee0">Male</div><div style="left:1104.6px;top:23px;color:#3cb65c">Yes</div><div style="left:1159px;top:23px;color:#3cb65c">Yes</div><div style="left:1232px;top:23px;">0% / 0</div><div style="left:1389.5px;top:23px;">Social Skills</div><div style="left:1532.3px;top:5.8px;width:235px;height:18px"><svg style="position:absolute;left:0px;top:0" width="18" height="18" viewBox="0 0 18 18"><path fill="#3d67ae" d="M9.00 0.60 L10.97 6.28 L16.99 6.40 L12.20 10.04 L13.94 15.80 L9.00 12.36 L4.06 15.80 L5.80 10.04 L1.01 6.40 L7.03 6.28 Z"/></svg><svg style="position:absolute;left:23px;top:0" width="18" height="18" viewBox="0 0 18 18"><path fill="#3d67ae" d="M9.00 0.60 L10.97 6.28 L16.99 6.40 L12.20 10.04 L13.94 15.80 L9.00 12.36 L4.06 15.80 L5.80 10.04 L1.01 6.40 L7.03 6.28 Z"/></svg><svg style="position:absolute;left:46px;top:0" width="18" height="18" viewBox="0 0 18 18"><path fill="#3d67ae" d="M9.00 0.60 L10.97 6.28 L16.99 6.40 L12.20 10.04 L13.94 15.80 L9.00 12.36 L4.06 15.80 L5.80 10.04 L1.01 6.40 L7.03 6.28 Z"/></svg><svg style="position:absolute;left:69px;top:0" width="18" height="18" viewBox="0 0 18 18"><path fill="#3d67ae" d="M9.00 0.60 L10.97 6.28 L16.99 6.40 L12.20 10.04 L13.94 15.80 L9.00 12.36 L4.06 15.80 L5.80 10.04 L1.01 6.40 L7.03 6.28 Z"/></svg><svg style="position:absolute;left:92px;top:0" width="18" height="18" viewBox="0 0 18 18"><path fill="#3d67ae" d="M9.00 0.60 L10.97 6.28 L16.99 6.40 L12.20 10.04 L13.94 15.80 L9.00 12.36 L4.06 15.80 L5.80 10.04 L1.01 6.40 L7.03 6.28 Z"/></svg><svg style="position:absolute;left:115px;top:0" width="18" height="18" viewBox="0 0 18 18"><path fill="#3d67ae" d="M9.00 0.60 L10.97 6.28 L16.99 6.40 L12.20 10.04 L13.94 15.80 L9.00 12.36 L4.06 15.80 L5.80 10.04 L1.01 6.40 L7.03 6.28 Z"/></svg><svg style="position:absolute;left:138px;top:0" width="18" height="18" viewBox="0 0 18 18"><path fill="#d5d6d8" d="M9.00 0.60 L10.97 6.28 L16.99 6.40 L12.20 10.04 L13.94 15.80 L9.00 12.36 L4.06 15.80 L5.80 10.04 L1.01 6.40 L7.03 6.28 Z"/></svg><svg style="position:absolute;left:161px;top:0" width="18" height="18" viewBox="0 0 18 18"><path fill="#d5d6d8" d="M9.00 0.60 L10.97 6.28 L16.99 6.40 L12.20 10.04 L13.94 15.80 L9.00 12.36 L4.06 15.80 L5.80 10.04 L1.01 6.40 L7.03 6.28 Z"/></svg><svg style="position:absolute;left:184px;top:0" width="18" height="18" viewBox="0 0 18 18"><path fill="#d5d6d8" d="M9.00 0.60 L10.97 6.28 L16.99 6.40 L12.20 10.04 L13.94 15.80 L9.00 12.36 L4.06 15.80 L5.80 10.04 L1.01 6.40 L7.03 6.28 Z"/></svg><svg style="position:absolute;left:207px;top:0" width="18" height="18" viewBox="0 0 18 18"><path fill="#d5d6d8" d="M9.00 0.60 L10.97 6.28 L16.99 6.40 L12.20 10.04 L13.94 15.80 L9.00 12.36 L4.06 15.80 L5.80 10.04 L1.01 6.40 L7.03 6.28 Z"/></svg></div><div style="left:1616.4px;top:32.5px;width:60px;text-align:center;font-size:13.3px">60%</div><div style="left:1775.8px;top:23px;">Accepted</div></div><div class="row" style="top:394px;background:#c4e9d4;border-bottom-color:#b3d4c0"><div style="left:-1px;top:-1px;width:3px;height:70px;background:#26b562"></div><div class="badge" style="left:55.2px;top:24px;background:#dc1440">C</div><div style="left:369.5px;top:13px;">September 25,<br>2020</div><div style="left:738.8px;top:23px;">Grade 7</div><div style="left:850.5px;top:23px;">Foundations 1</div><div style="left:985.8px;top:23px;color:#2a9ee0">Male</div><div style="left:1104.6px;top:23px;color:#3cb65c">Yes</div><div style="left:1159px;top:23px;color:#3cb65c">Yes</div><div style="left:1232px;top:23px;">0% / 0</div><div style="left:1389.5px;top:13px;">Mental Health<br>Concern</div><div style="left:1532.3px;top:5.8px;width:235px;height:18px"><svg style="position:absolute;left:0px;top:0" width="18" height="18" viewBox="0 0 18 18"><path fill="#3d67ae" d="M9.00 0.60 L10.97 6.28 L16.99 6.40 L12.20 10.04 L13.94 15.80 L9.00 12.36 L4.06 15.80 L5.80 10.04 L1.01 6.40 L7.03 6.28 Z"/></svg><svg style="position:absolute;left:23px;top:0" width="18" height="18" viewBox="0 0 18 18"><path fill="#3d67ae" d="M9.00 0.60 L10.97 6.28 L16.99 6.40 L12.20 10.04 L13.94 15.80 L9.00 12.36 L4.06 15.80 L5.80 10.04 L1.01 6.40 L7.03 6.28 Z"/></svg><svg style="position:absolute;left:46px;top:0" width="18" height="18" viewBox="0 0 18 18"><path fill="#3d67ae" d="M9.00 0.60 L10.97 6.28 L16.99 6.40 L12.20 10.04 L13.94 15.80 L9.00 12.36 L4.06 15.80 L5.80 10.04 L1.01 6.40 L7.03 6.28 Z"/></svg><svg style="position:absolute;left:69px;top:0" width="18" height="18" viewBox="0 0 18 18"><path fill="#3d67ae" d="M9.00 0.60 L10.97 6.28 L16.99 6.40 L12.20 10.04 L13.94 15.80 L9.00 12.36 L4.06 15.80 L5.80 10.04 L1.01 6.40 L7.03 6.28 Z"/></svg><svg style="position:absolute;left:92px;top:0" width="18" height="18" viewBox="0 0 18 18"><path fill="#3d67ae" d="M9.00 0.60 L10.97 6.28 L16.99 6.40 L12.20 10.04 L13.94 15.80 L9.00 12.36 L4.06 15.80 L5.80 10.04 L1.01 6.40 L7.03 6.28 Z"/></svg><svg style="position:absolute;left:115px;top:0" width="18" height="18" viewBox="0 0 18 18"><path fill="#3d67ae" d="M9.00 0.60 L10.97 6.28 L16.99 6.40 L12.20 10.04 L13.94 15.80 L9.00 12.36 L4.06 15.80 L5.80 10.04 L1.01 6.40 L7.03 6.28 Z"/></svg><svg style="position:absolute;left:138px;top:0" width="18" height="18" viewBox="0 0 18 18"><path fill="#3d67ae" d="M9.00 0.60 L10.97 6.28 L16.99 6.40 L12.20 10.04 L13.94 15.80 L9.00 12.36 L4.06 15.80 L5.80 10.04 L1.01 6.40 L7.03 6.28 Z"/></svg><svg style="position:absolute;left:161px;top:0" width="18" height="18" viewBox="0 0 18 18"><path fill="#d5d6d8" d="M9.00 0.60 L10.97 6.28 L16.99 6.40 L12.20 10.04 L13.94 15.80 L9.00 12.36 L4.06 15.80 L5.80 10.04 L1.01 6.40 L7.03 6.28 Z"/></svg><svg style="position:absolute;left:184px;top:0" width="18" height="18" viewBox="0 0 18 18"><path fill="#d5d6d8" d="M9.00 0.60 L10.97 6.28 L16.99 6.40 L12.20 10.04 L13.94 15.80 L9.00 12.36 L4.06 15.80 L5.80 10.04 L1.01 6.40 L7.03 6.28 Z"/></svg><svg style="position:absolute;left:207px;top:0" width="18" height="18" viewBox="0 0 18 18"><path fill="#d5d6d8" d="M9.00 0.60 L10.97 6.28 L16.99 6.40 L12.20 10.04 L13.94 15.80 L9.00 12.36 L4.06 15.80 L5.80 10.04 L1.01 6.40 L7.03 6.28 Z"/></svg></div><div style="left:1616.4px;top:32.5px;width:60px;text-align:center;font-size:13.3px">70%</div><div style="left:1775.8px;top:23px;">Accepted</div></div><div class="row" style="top:463px;background:#bde0ca;border-bottom-color:#b3d4c0"><div style="left:-1px;top:-1px;width:3px;height:70px;background:#26b562"></div><div class="badge" style="left:55.2px;top:24px;background:#dc1440">C</div><div style="left:369.5px;top:23px;">October 07, 2020</div><div style="left:738.8px;top:23px;">Grade 8</div><div style="left:850.5px;top:23px;">8C. Cohort 1</div><div style="left:985.8px;top:23px;color:#2a9ee0">Male</div><div style="left:1104.6px;top:23px;color:#3cb65c">Yes</div><div style="left:1159px;top:23px;color:#3cb65c">Yes</div><div style="left:1232px;top:23px;">0% / 0</div><div style="left:1389.5px;top:13px;">Mental Health<br>Concern</div><div style="left:1532.3px;top:5.8px;width:235px;height:18px"><svg style="position:absolute;left:0px;top:0" width="18" height="18" viewBox="0 0 18 18"><path fill="#3d67ae" d="M9.00 0.60 L10.97 6.28 L16.99 6.40 L12.20 10.04 L13.94 15.80 L9.00 12.36 L4.06 15.80 L5.80 10.04 L1.01 6.40 L7.03 6.28 Z"/></svg><svg style="position:absolute;left:23px;top:0" width="18" height="18" viewBox="0 0 18 18"><path fill="#3d67ae" d="M9.00 0.60 L10.97 6.28 L16.99 6.40 L12.20 10.04 L13.94 15.80 L9.00 12.36 L4.06 15.80 L5.80 10.04 L1.01 6.40 L7.03 6.28 Z"/></svg><svg style="position:absolute;left:46px;top:0" width="18" height="18" viewBox="0 0 18 18"><path fill="#3d67ae" d="M9.00 0.60 L10.97 6.28 L16.99 6.40 L12.20 10.04 L13.94 15.80 L9.00 12.36 L4.06 15.80 L5.80 10.04 L1.01 6.40 L7.03 6.28 Z"/></svg><svg style="position:absolute;left:69px;top:0" width="18" height="18" viewBox="0 0 18 18"><path fill="#3d67ae" d="M9.00 0.60 L10.97 6.28 L16.99 6.40 L12.20 10.04 L13.94 15.80 L9.00 12.36 L4.06 15.80 L5.80 10.04 L1.01 6.40 L7.03 6.28 Z"/></svg><svg style="position:absolute;left:92px;top:0" width="18" height="18" viewBox="0 0 18 18"><path fill="#3d67ae" d="M9.00 0.60 L10.97 6.28 L16.99 6.40 L12.20 10.04 L13.94 15.80 L9.00 12.36 L4.06 15.80 L5.80 10.04 L1.01 6.40 L7.03 6.28 Z"/></svg><svg style="position:absolute;left:115px;top:0" width="18" height="18" viewBox="0 0 18 18"><path fill="#3d67ae" d="M9.00 0.60 L10.97 6.28 L16.99 6.40 L12.20 10.04 L13.94 15.80 L9.00 12.36 L4.06 15.80 L5.80 10.04 L1.01 6.40 L7.03 6.28 Z"/></svg><svg style="position:absolute;left:138px;top:0" width="18" height="18" viewBox="0 0 18 18"><path fill="#3d67ae" d="M9.00 0.60 L10.97 6.28 L16.99 6.40 L12.20 10.04 L13.94 15.80 L9.00 12.36 L4.06 15.80 L5.80 10.04 L1.01 6.40 L7.03 6.28 Z"/></svg><svg style="position:absolute;left:161px;top:0" width="18" height="18" viewBox="0 0 18 18"><path fill="#3d67ae" d="M9.00 0.60 L10.97 6.28 L16.99 6.40 L12.20 10.04 L13.94 15.80 L9.00 12.36 L4.06 15.80 L5.80 10.04 L1.01 6.40 L7.03 6.28 Z"/></svg><svg style="position:absolute;left:184px;top:0" width="18" height="18" viewBox="0 0 18 18"><path fill="#d5d6d8" d="M9.00 0.60 L10.97 6.28 L16.99 6.40 L12.20 10.04 L13.94 15.80 L9.00 12.36 L4.06 15.80 L5.80 10.04 L1.01 6.40 L7.03 6.28 Z"/></svg><svg style="position:absolute;left:207px;top:0" width="18" height="18" viewBox="0 0 18 18"><path fill="#d5d6d8" d="M9.00 0.60 L10.97 6.28 L16.99 6.40 L12.20 10.04 L13.94 15.80 L9.00 12.36 L4.06 15.80 L5.80 10.04 L1.01 6.40 L7.03 6.28 Z"/></svg></div><div style="left:1616.4px;top:32.5px;width:60px;text-align:center;font-size:13.3px">80%</div><div style="left:1775.8px;top:23px;">Accepted</div></div></div>
</body></html>
